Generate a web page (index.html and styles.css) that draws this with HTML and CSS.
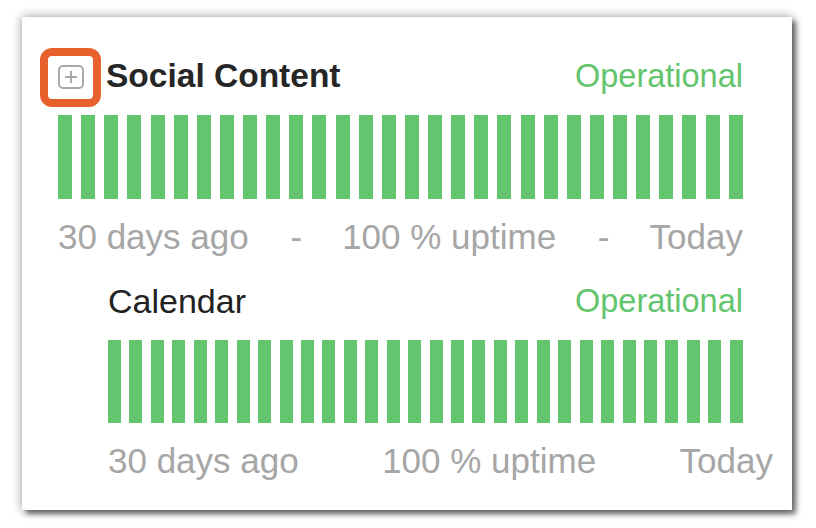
FILE: index.html
```html
<!DOCTYPE html>
<html>
<head>
<meta charset="utf-8">
<link rel="stylesheet" href="styles.css">
</head>
<body>
<div class="card">
  <section class="group">
    <div class="head">
      <div class="title-wrap">
        <span class="toggle">
          <svg width="26" height="24" viewBox="0 0 26 24"><rect x="1" y="1" width="24" height="22" rx="4" fill="none" stroke="#a9a9a9" stroke-width="2"/><path d="M13 6v12M7 12h12" stroke="#a9a9a9" stroke-width="2" fill="none"/></svg>
          <span class="highlight"></span>
        </span>
        <span class="title bold">Social Content</span>
      </div>
      <span class="status">Operational</span>
    </div>
    <div class="bars wide" id="bars1"></div>
    <div class="foot">
      <span>30 days ago</span><span class="dash">-</span><span>100 % uptime</span><span class="dash">-</span><span>Today</span>
    </div>
  </section>
  <section class="group child">
    <div class="head">
      <span class="title">Calendar</span>
      <span class="status">Operational</span>
    </div>
    <div class="bars narrow" id="bars2"></div>
    <div class="foot wide-foot">
      <span>30 days ago</span><span class="dash hidden">-</span><span>100 % uptime</span><span class="dash hidden">-</span><span>Today</span>
    </div>
  </section>
</div>
<script>
['bars1','bars2'].forEach(function(id){
  var el=document.getElementById(id);
  for(var i=0;i<30;i++){var b=document.createElement('span');b.className='bar';el.appendChild(b);}
});
</script>
</body>
</html>
```

FILE: styles.css
```css
html, body {
  margin: 0;
  background: #ffffff;
}
body {
  box-sizing: border-box;
  height: 528px;
  padding: 17px 0 0 22px;
  font-family: "Liberation Sans", Arial, Helvetica, sans-serif;
}
.card {
  width: 770px;
  height: 493px;
  box-sizing: border-box;
  background: #fff;
  padding: 39px 49px 0 36px;
  box-shadow: 4px 4px 5px rgba(0,0,0,0.5), 0 0 10px rgba(0,0,0,0.4);
}
.head {
  display: flex;
  justify-content: space-between;
  align-items: center;
  height: 40px;
}
.title-wrap {
  display: flex;
  align-items: center;
  gap: 22px;
}
.toggle {
  position: relative;
  display: flex;
  width: 26px;
  height: 24px;
  margin-top: 2px;
}
.highlight {
  position: absolute;
  left: -18px;
  top: -17px;
  right: -17px;
  bottom: -18px;
  border: 8px solid #e8612c;
  border-radius: 12px;
}
.title {
  color: #222;
  font-size: 34px;
  line-height: 40px;
}
.title.bold {
  font-weight: bold;
  font-size: 33.5px;
  color: #262626;
}
.status {
  color: #62c46c;
  font-size: 32.5px;
  line-height: 40px;
}
.bars {
  display: flex;
  justify-content: space-between;
  margin-top: 19px;
}
.bars.wide { height: 84px; }
.bars.narrow { height: 83px; }
.bar {
  display: block;
  background: #63c56d;
}
.wide .bar { width: 14px; }
.narrow .bar { width: 13px; }
.foot {
  display: flex;
  justify-content: space-between;
  margin-top: 18px;
  color: #a6a6a6;
  font-size: 35px;
  line-height: 40px;
}
.dash { width: 10px; text-align: center; }
.hidden { visibility: hidden; }
.child {
  margin-left: 50px;
  margin-top: 24px;
}
.wide-foot {
  margin-right: -30px;
}
```
